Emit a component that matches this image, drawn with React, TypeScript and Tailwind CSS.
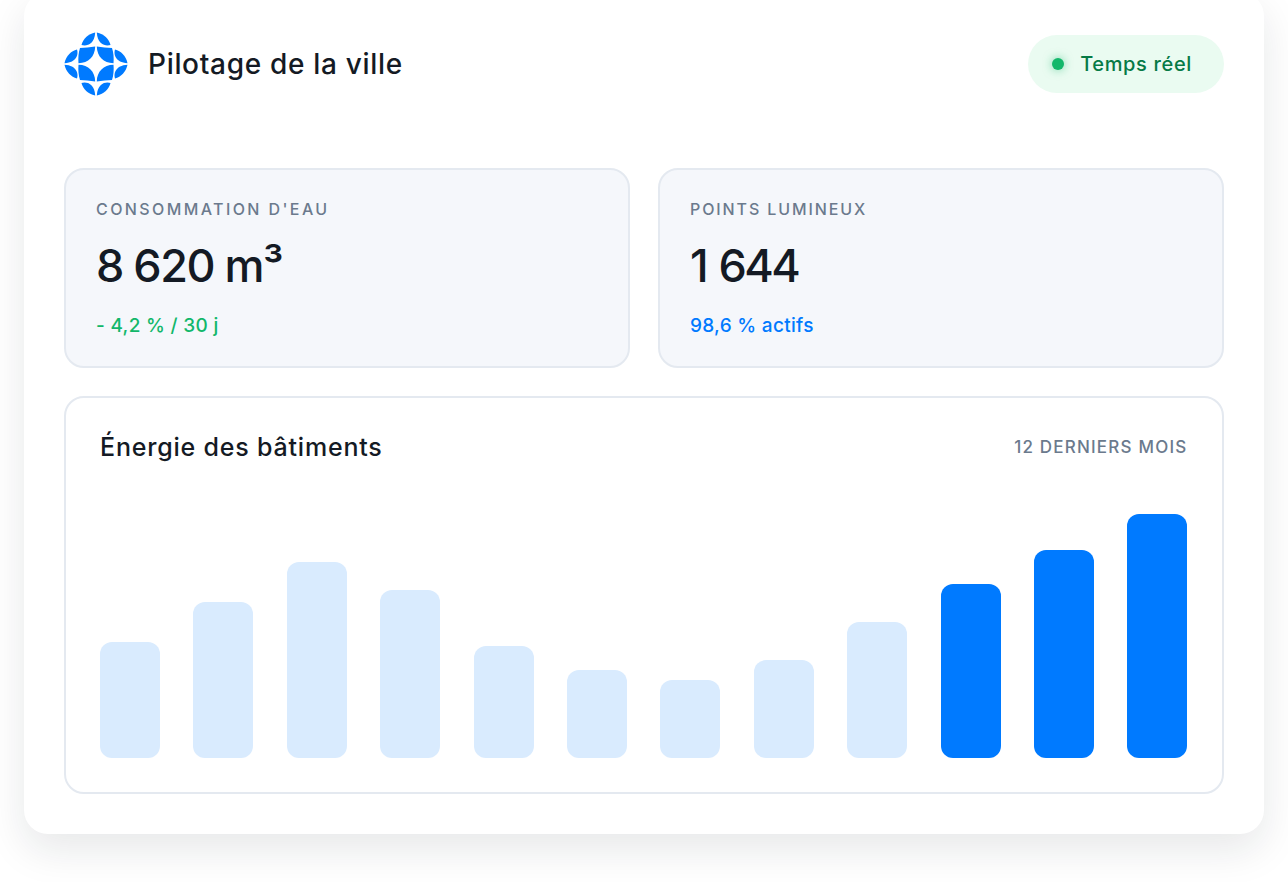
const bars = [
  { h: 116, on: false },
  { h: 156, on: false },
  { h: 196, on: false },
  { h: 168, on: false },
  { h: 112, on: false },
  { h: 88, on: false },
  { h: 78, on: false },
  { h: 98, on: false },
  { h: 136, on: false },
  { h: 174, on: true },
  { h: 208, on: true },
  { h: 244, on: true },
];

function LogoQuarter({ transform }: { transform?: string }) {
  return (
    <g transform={transform}>
      <path d="M31.200 0.500C24 2 19 7 17.500 13C22 14.500 30.500 13 31.200 0.500Z" />
      <path d="M0.500 31.200C2 24 7 19 13 17.500C14.500 22 13 30.500 0.500 31.200Z" />
      <path d="M31.200 14.500C31 24.500 24.500 31 14.500 31.200C14 26 14.500 20.500 16 16C21 15.500 26 15.500 31.200 14.500Z" />
    </g>
  );
}

function Logo() {
  return (
    <svg width="64" height="64" viewBox="0 0 64 64" fill="#007aff">
      <LogoQuarter />
      <LogoQuarter transform="translate(64 0) scale(-1 1)" />
      <LogoQuarter transform="translate(0 64) scale(1 -1)" />
      <LogoQuarter transform="translate(64 64) scale(-1 -1)" />
    </svg>
  );
}

function StatCard({ label, labelTracking, value, valueTracking, note, noteColor }: { label: string; labelTracking: string; value: string; valueTracking: string; note: string; noteColor: string }) {
  return (
    <div className="h-[200px] rounded-[20px] border-2 border-[#e4e9f0] bg-[#f5f7fb] px-[30px] pt-[27px]">
      <div className={`text-[16px] font-[450] leading-[24px] text-[#6b7a8d] ${labelTracking}`}>{label}</div>
      <div className={`mt-[17px] text-[45px] font-medium leading-[56px] text-[#141a24] ${valueTracking}`}>{value}</div>
      <div className={`mt-[18px] text-[19px] font-medium leading-[28px] tracking-[0.3px] ${noteColor}`}>{note}</div>
    </div>
  );
}

export default function App() {
  return (
    <div className="h-[882px] overflow-hidden bg-white px-6 font-['Inter','Liberation_Sans',sans-serif]">
      <div className="-mt-2 h-[842px] rounded-[24px] bg-white px-10 pt-10 shadow-[0_16px_40px_rgba(20,26,36,0.1)]">
        <header className="flex h-[64px] items-center justify-between">
          <div className="flex items-center gap-5">
            <Logo />
            <h1 className="text-[28px] font-medium tracking-[0.68px] text-[#141a24]">Pilotage de la ville</h1>
          </div>
          <div className="flex h-[58px] items-center gap-4 rounded-full bg-[#eafbf1] pl-6 pr-[32px] text-[20px] font-medium tracking-[0.65px] text-[#067a46]">
            <span className="h-3 w-3 rounded-full bg-[#12b76a] shadow-[0_0_10px_rgba(18,183,106,0.55)]" />
            Temps réel
          </div>
        </header>

        <div className="mt-[72px] grid grid-cols-2 gap-7">
          <StatCard label="CONSOMMATION D'EAU" labelTracking="tracking-[2.4px]" value="8 620 m³" valueTracking="tracking-[-1.5px]" note="- 4,2 % / 30 j" noteColor="text-[#12b76a]" />
          <StatCard label="POINTS LUMINEUX" labelTracking="tracking-[1.9px]" value="1 644" valueTracking="tracking-[-2.6px] [word-spacing:3px]" note="98,6 % actifs" noteColor="text-[#007aff]" />
        </div>

        <section className="mt-7 flex h-[398px] flex-col rounded-[20px] border-2 border-[#e4e9f0] pb-[34px] pl-[34px] pr-[34.6px] pt-[31px]">
          <div className="flex items-center justify-between">
            <h2 className="text-[25px] font-medium leading-[36px] tracking-[0.8px] text-[#141a24]">Énergie des bâtiments</h2>
            <span className="pt-[2px] text-[17px] font-[450] tracking-[1.2px] text-[#6b7a8d]">12 DERNIERS MOIS</span>
          </div>
          <div className="mt-auto flex items-end justify-between">
            {bars.map((bar, i) => (
              <div
                key={i}
                className={`w-[60px] rounded-[12px] ${bar.on ? "bg-[#007aff]" : "bg-[#d9ebfe]"}`}
                style={{ height: bar.h }}
              />
            ))}
          </div>
        </section>
      </div>
    </div>
  );
}
